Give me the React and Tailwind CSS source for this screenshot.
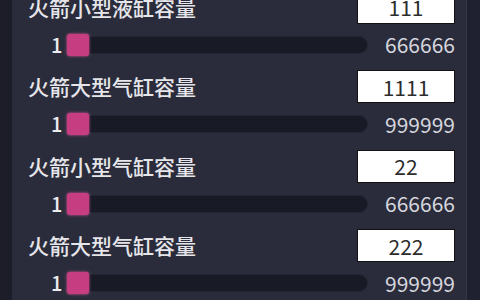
import { useState } from "react";

const rows = [
  { label: "火箭小型液缸容量", value: "111", min: 1, max: "666666" },
  { label: "火箭大型气缸容量", value: "1111", min: 1, max: "999999" },
  { label: "火箭小型气缸容量", value: "22", min: 1, max: "666666" },
  { label: "火箭大型气缸容量", value: "222", min: 1, max: "999999" },
];

function SettingRow({ row }) {
  const [value, setValue] = useState(row.value);
  return (
    <div className="flex flex-col">
      <div className="flex items-center justify-between h-[33px]">
        <span className="text-[21px] leading-none font-medium text-[#e6e6ea]">{row.label}</span>
        <input
          value={value}
          onChange={(e) => setValue(e.target.value)}
          className="w-[98px] h-[33px] border border-[#111] bg-white text-center text-[21px] text-[#2c2c2c] outline-none"
        />
      </div>
      <div className="flex items-center h-[24px] mt-[9px]">
        <span className="w-[23px]" />
        <span className="w-[16px] text-[20px] leading-none font-medium text-[#ececf0]">{row.min}</span>
        <div className="relative flex-1 h-[18px] rounded-r-full bg-[#181a26] border border-[#232535]">
          <div className="absolute left-[-1px] top-[-3px] w-[22px] h-[22px] rounded-[3px] bg-[#c63d82] shadow-[0_0_3px_#e05a9a]" />
        </div>
        <span className="w-[87px] text-right text-[21px] leading-none text-[#d6d6de]">{row.max}</span>
      </div>
    </div>
  );
}

export default function App() {
  return (
    <div
      className="flex w-[480px] h-[300px] overflow-hidden bg-[#2a2c3b]"
      style={{ fontFamily: '"Noto Sans CJK SC", "Noto Sans", sans-serif' }}
    >
      <div className="w-[12px] bg-[#1c1d28]" />
      <div className="flex-1 pl-[16px] pr-[11px]">
        <div className="flex flex-col gap-[13.5px] mt-[-9.5px]">
          {rows.map((row, i) => (
            <SettingRow key={i} row={row} />
          ))}
        </div>
      </div>
      <div className="w-[14px] bg-[#1f2030] border-l border-[#34364a]" />
    </div>
  );
}
